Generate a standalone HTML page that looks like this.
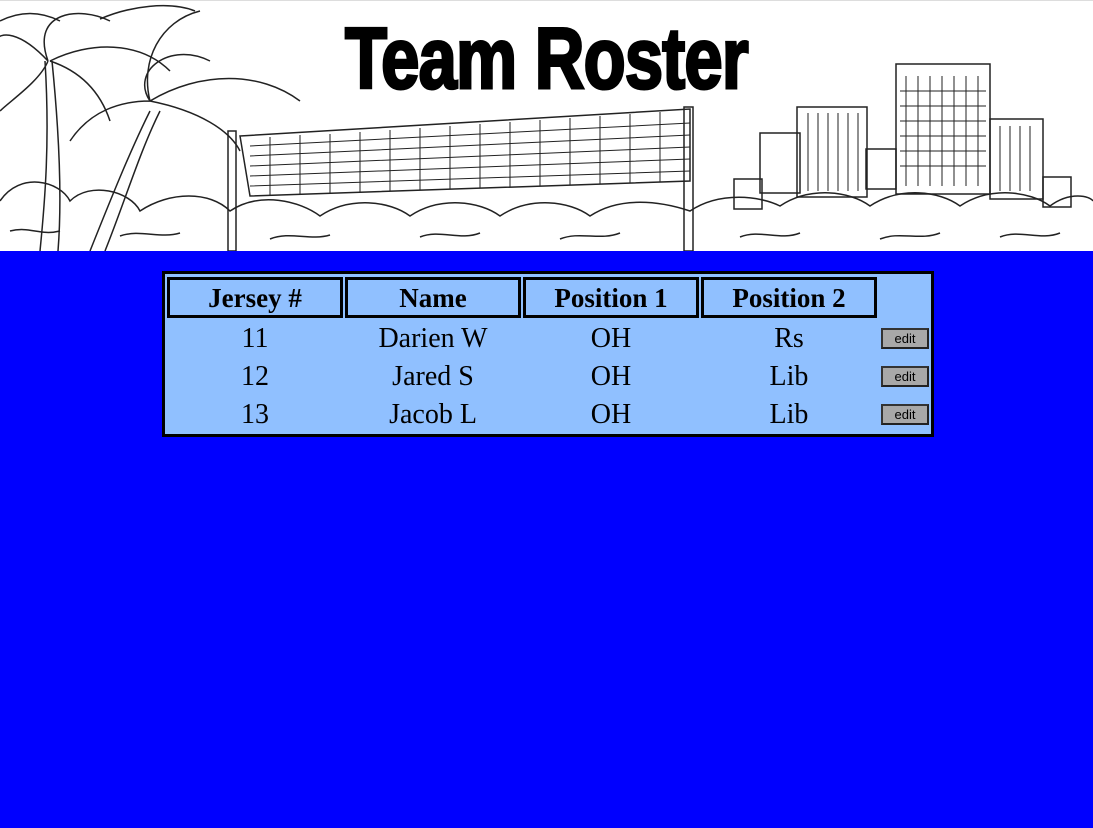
<!DOCTYPE html>
<html><head><style>
html,body{margin:0;padding:0;}
body{width:1093px;height:828px;background:#0000ff;overflow:hidden;position:relative;font-family:"Liberation Serif",serif;}
#hdr{position:absolute;left:0;top:0;width:1093px;height:251px;background:#fff;border-top:1px solid #ddd;box-sizing:border-box;overflow:hidden;}
#title{position:absolute;left:345px;top:10px;width:560px;font-family:"Liberation Sans",sans-serif;font-weight:bold;font-size:86px;line-height:96px;letter-spacing:-1px;transform:scaleX(0.8);transform-origin:0 0;-webkit-text-stroke:3px #000;color:#000;white-space:nowrap;}
#tbl{position:absolute;left:162px;top:271px;width:766px;height:160px;border:3px solid #000;background:#90c0ff;}
.h{position:absolute;top:3px;height:35px;border:3px solid #000;box-sizing:content-box;width:170px;text-align:center;font-weight:bold;font-size:27px;line-height:36px;}
.c{position:absolute;width:176px;text-align:center;font-size:28px;line-height:38px;}
.b{position:absolute;left:716px;width:44px;height:17px;background:#a8a8a8;border:2px solid;border-color:#333 #222 #222 #333;font-family:"Liberation Sans",sans-serif;font-size:13px;line-height:17px;text-align:center;color:#000;}
</style></head><body>
<div id="hdr">
<svg width="1093" height="251" style="position:absolute;left:0;top:0" fill="none" stroke="#222" stroke-width="1.5">
<path d="M40 250 C45 200 50 140 45 60 M58 250 C62 200 60 140 52 60"/>
<path d="M90 250 C110 200 130 150 150 110 M105 250 C125 200 140 150 160 110"/>
<path d="M48 60 C20 30 0 30 -5 40 M48 60 C30 10 80 5 110 20 M50 60 C90 40 140 40 170 70 M48 60 C40 80 10 100 0 110 M50 60 C80 70 100 90 110 120"/>
<path d="M150 100 C130 70 170 40 210 60 M150 100 C200 70 260 70 300 100 M150 100 C120 100 90 110 70 140 M150 100 C200 110 230 130 240 150 M150 100 C140 60 160 20 200 10"/>
<path d="M100 18 C130 5 170 0 195 10 M0 20 C20 10 40 10 60 20"/>
<rect x="228" y="130" width="8" height="120"/><rect x="684" y="106" width="9" height="144"/>
<path d="M240 135 L690 108 L690 180 L250 195 Z"/>
<g stroke-width="1">
<path d="M250 145 L690 122 M250 155 L690 134 M250 165 L690 146 M250 175 L690 158 M250 185 L690 170"/>
<path d="M270 136 V194 M300 134 V193 M330 133 V192 M360 131 V191 M390 129 V190 M420 127 V189 M450 125 V188 M480 123 V187 M510 121 V186 M540 119 V185 M570 117 V184 M600 115 V183 M630 113 V182 M660 111 V181"/>
</g>
<rect x="896" y="63" width="94" height="130"/><rect x="797" y="106" width="70" height="90"/><rect x="760" y="132" width="40" height="60"/><rect x="990" y="118" width="53" height="80"/><rect x="734" y="178" width="28" height="30"/><rect x="1043" y="176" width="28" height="30"/><rect x="866" y="148" width="30" height="40"/>
<g stroke-width="1"><path d="M906 75 V185 M918 75 V185 M930 75 V185 M942 75 V185 M954 75 V185 M966 75 V185 M978 75 V185 M900 90 H986 M900 105 H986 M900 120 H986 M900 135 H986 M900 150 H986 M900 165 H986"/>
<path d="M808 112 V190 M818 112 V190 M828 112 V190 M838 112 V190 M848 112 V190 M858 112 V190 M1000 125 V190 M1010 125 V190 M1020 125 V190 M1030 125 V190"/></g>
<path d="M0 200 C20 170 60 180 70 200 C90 180 130 190 140 210 C170 190 210 190 230 210 C260 190 300 200 320 215 C350 195 390 200 410 215 C440 195 480 200 500 215 C530 195 570 200 590 215 C620 195 660 200 690 210 C720 190 760 195 780 205 C810 185 850 190 870 205 C900 185 940 190 960 205 C990 185 1030 190 1050 205 C1070 190 1090 195 1093 200"/>
<path d="M10 230 C30 225 40 235 60 230 M120 235 C140 228 160 238 180 232 M270 238 C290 230 310 240 330 234 M420 236 C440 228 460 240 480 232 M560 238 C580 230 600 240 620 232 M740 236 C760 228 780 240 800 232 M880 238 C900 230 920 240 940 232 M1000 236 C1020 228 1040 240 1060 232"/>
</svg>
<div id="title">Team Roster</div>
</div>
<div id="tbl">
<div class="h" style="left:2px">Jersey #</div>
<div class="h" style="left:180px">Name</div>
<div class="h" style="left:358px">Position 1</div>
<div class="h" style="left:536px">Position 2</div>
<div class="c" style="left:2px;top:46px">11</div><div class="c" style="left:180px;top:46px">Darien W</div><div class="c" style="left:358px;top:46px">OH</div><div class="c" style="left:536px;top:46px">Rs</div><div class="b" style="top:54px">edit</div>
<div class="c" style="left:2px;top:84px">12</div><div class="c" style="left:180px;top:84px">Jared S</div><div class="c" style="left:358px;top:84px">OH</div><div class="c" style="left:536px;top:84px">Lib</div><div class="b" style="top:92px">edit</div>
<div class="c" style="left:2px;top:122px">13</div><div class="c" style="left:180px;top:122px">Jacob L</div><div class="c" style="left:358px;top:122px">OH</div><div class="c" style="left:536px;top:122px">Lib</div><div class="b" style="top:130px">edit</div>
</div>
</body></html>
